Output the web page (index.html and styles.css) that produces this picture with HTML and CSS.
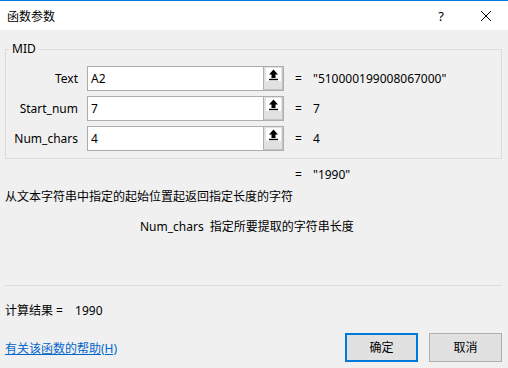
FILE: index.html
```html
<!DOCTYPE html>
<html lang="zh-CN">
<head>
    <meta charset="UTF-8">
    <title>函数参数</title>
    <link rel="stylesheet" href="styles.css">
</head>
<body>
    <div class="dialog">
        <div class="titlebar">
            <span class="title">函数参数</span>
            <span class="help-btn">?</span>
            <svg class="close-btn" width="12" height="12" viewBox="0 0 12 12">
                <path d="M1 1 L11 11 M11 1 L1 11" stroke="#000" stroke-width="1" fill="none"/>
            </svg>
        </div>

        <div class="main">
            <fieldset class="args">
                <legend>MID</legend>

                <div class="arg-row">
                    <label>Text</label>
                    <div class="field">
                        <span class="val">A2</span>
                        <span class="ref"><svg width="15" height="13" viewBox="0 0 15 13"><rect width="15" height="13" fill="#fff"/><path d="M7.5 1.5 L12 6.5 H9.5 V10 H5.5 V6.5 H3 Z" fill="#000"/><path d="M3 11.5 H12" stroke="#000" stroke-width="1.4"/></svg></span>
                    </div>
                    <span class="eq">=</span>
                    <span class="res">"510000199008067000"</span>
                </div>

                <div class="arg-row">
                    <label>Start_num</label>
                    <div class="field">
                        <span class="val">7</span>
                        <span class="ref"><svg width="15" height="13" viewBox="0 0 15 13"><rect width="15" height="13" fill="#fff"/><path d="M7.5 1.5 L12 6.5 H9.5 V10 H5.5 V6.5 H3 Z" fill="#000"/><path d="M3 11.5 H12" stroke="#000" stroke-width="1.4"/></svg></span>
                    </div>
                    <span class="eq">=</span>
                    <span class="res">7</span>
                </div>

                <div class="arg-row">
                    <label>Num_chars</label>
                    <div class="field">
                        <span class="val">4</span>
                        <span class="ref"><svg width="15" height="13" viewBox="0 0 15 13"><rect width="15" height="13" fill="#fff"/><path d="M7.5 1.5 L12 6.5 H9.5 V10 H5.5 V6.5 H3 Z" fill="#000"/><path d="M3 11.5 H12" stroke="#000" stroke-width="1.4"/></svg></span>
                    </div>
                    <span class="eq">=</span>
                    <span class="res">4</span>
                </div>
            </fieldset>

            <div class="total"><span class="eq">=</span><span class="res">"1990"</span></div>

            <p class="desc">从文本字符串中指定的起始位置起返回指定长度的字符</p>
            <p class="arg-desc"><span class="arg-name">Num_chars</span>指定所要提取的字符串长度</p>

            <hr class="sep">

            <div class="result">计算结果 = <span class="result-val">1990</span></div>

            <div class="footer">
                <a href="#" class="help-link">有关该函数的帮助(H)</a>
                <div class="buttons">
                    <button class="btn btn-default">确定</button>
                    <button class="btn">取消</button>
                </div>
            </div>
        </div>
    </div>
</body>
</html>
```

FILE: styles.css
```css
body {
    margin: 0;
    font-family: "Noto Sans", "Noto Sans CJK SC", sans-serif;
    font-size: 12px;
    line-height: 16px;
    color: #000;
}

.dialog {
    width: 508px;
    height: 368px;
    background: #f0f0f0;
    overflow: hidden;
}

.titlebar {
    display: flex;
    align-items: center;
    height: 29px;
    border-top: 1px solid #0078d7;
    background: #fff;
    padding-left: 7px;
}

.title {
    flex: 1;
    padding-top: 2px;
}

.help-btn {
    font-size: 13px;
    margin-right: 36px;
}

.close-btn {
    margin-right: 16px;
}

.main {
    padding: 0 6px 0 5px;
}

.args {
    margin: 11px 0 0 0;
    padding: 9px 0 7px 0;
    border: 1px solid #dcdcdc;
    display: flex;
    flex-direction: column;
    gap: 5px;
}

.args legend {
    margin-left: 3px;
    padding: 0 3px;
    line-height: 16px;
}

.arg-row {
    display: flex;
    align-items: center;
    height: 25px;
}

.arg-row label {
    width: 72px;
    margin-right: 9px;
    text-align: right;
}

.field {
    display: flex;
    width: 197px;
    height: 25px;
    box-sizing: border-box;
    border: 1px solid #adadad;
    background: #fff;
}

.field .val {
    flex: 1;
    padding-left: 3px;
    line-height: 23px;
}

.field .ref {
    width: 20px;
    box-sizing: border-box;
    padding: 1px 0 0 2px;
    background: #e1e1e1;
    border-left: 1px solid #adadad;
    border-right: 1px solid #c4c4c4;
    border-bottom: 1px solid #c4c4c4;
}

.field .ref svg {
    display: block;
}

.eq {
    display: inline-block;
    width: 18px;
    margin-left: 11px;
}

.total {
    margin-top: 8px;
    padding-left: 290px;
}

.total .eq {
    margin-left: 0;
}

.desc {
    margin: 6px 0 0 0;
}

.arg-desc {
    margin: 14px 0 0 135px;
}

.arg-name {
    margin-right: 6px;
}

.sep {
    margin: 50px 0 0 0;
    border: none;
    border-top: 1px solid #dcdcdc;
}

.result {
    margin-top: 17px;
}

.result-val {
    margin-left: 9px;
}

.footer {
    display: flex;
    align-items: center;
    margin-top: 14px;
}

.help-link {
    flex: 1;
    color: #0066cc;
    padding-top: 2px;
}

.buttons {
    display: flex;
    gap: 11px;
}

.btn {
    width: 73px;
    height: 29px;
    font: inherit;
    background: #e1e1e1;
    border: 1px solid #adadad;
    padding: 0;
}

.btn-default {
    border: 2px solid #0078d7;
}
```
